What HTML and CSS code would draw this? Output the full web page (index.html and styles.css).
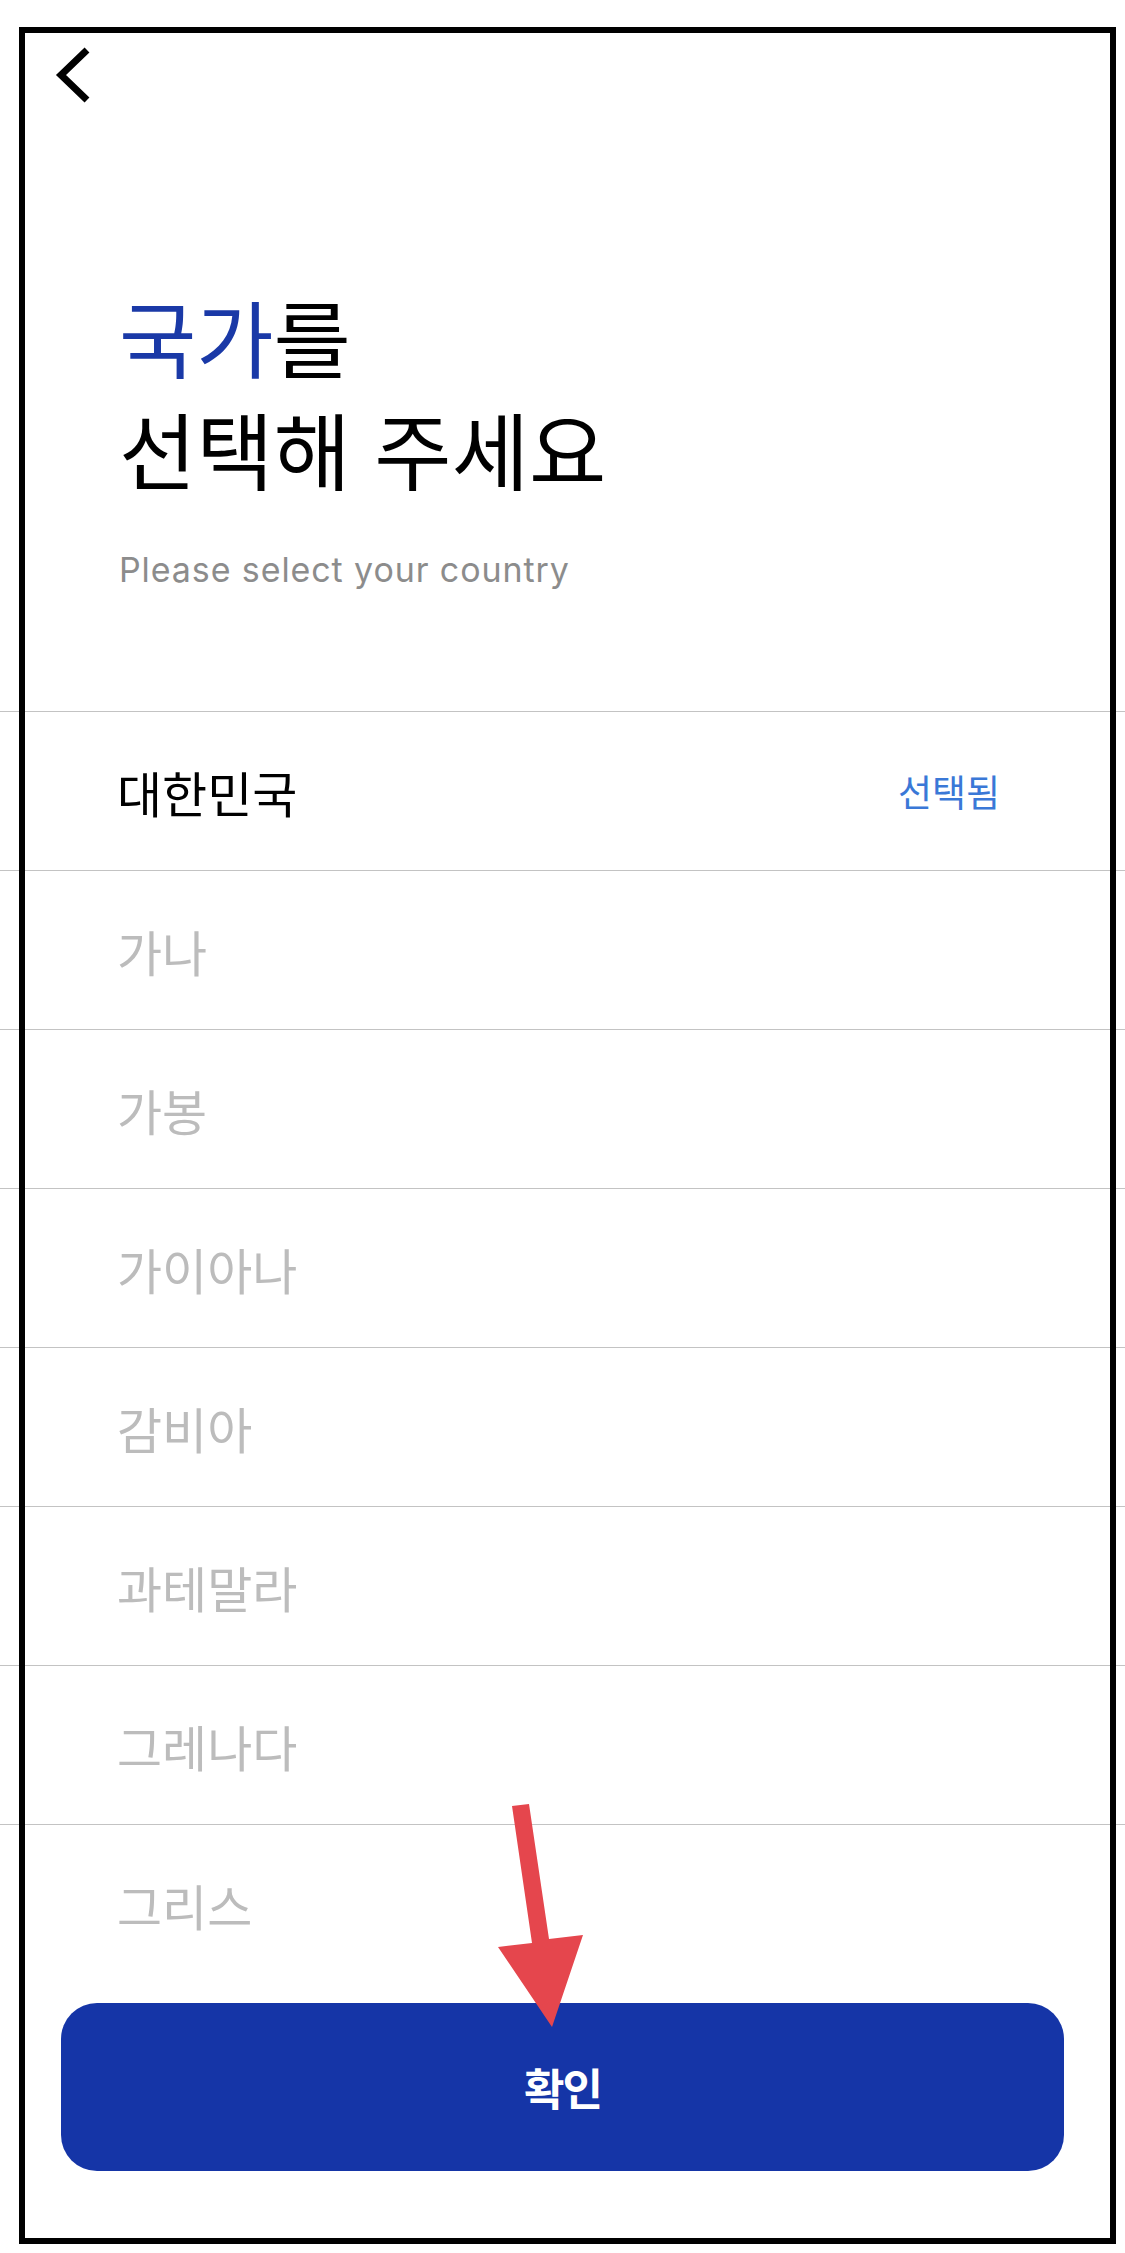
FILE: index.html
```html
<!DOCTYPE html>
<html lang="ko">
<head>
<meta charset="utf-8">
<title>국가 선택</title>
<link rel="stylesheet" href="styles.css">
</head>
<body>
<div class="screen">
  <header class="topbar">
    <button class="back" aria-label="뒤로">
      <svg width="44" height="62" viewBox="0 0 44 62">
        <polyline points="35,3 9,28 35,53" fill="none" stroke="#000" stroke-width="7" stroke-linejoin="miter"/>
      </svg>
    </button>
  </header>

  <section class="intro">
    <h1 class="title"><span class="accent">국가</span>를<br>선택해 주세요</h1>
    <p class="subtitle">Please select your country</p>
  </section>

  <ul class="country-list">
    <li class="country selected"><span class="name">대한민국</span><span class="badge">선택됨</span></li>
    <li class="country"><span class="name">가나</span></li>
    <li class="country"><span class="name">가봉</span></li>
    <li class="country"><span class="name">가이아나</span></li>
    <li class="country"><span class="name">감비아</span></li>
    <li class="country"><span class="name">과테말라</span></li>
    <li class="country"><span class="name">그레나다</span></li>
    <li class="country last"><span class="name">그리스</span></li>
  </ul>

  <footer class="footer">
    <button class="confirm">확인</button>
  </footer>

  <div class="frame"></div>
  <svg class="arrow" width="100" height="235" viewBox="0 0 100 235">
    <polygon points="22,6 39,4 59,139 93,135 62,227 8,147 42,143" fill="#e5464d"/>
  </svg>
</div>
</body>
</html>
```

FILE: styles.css
```css
html, body {
  margin: 0;
  padding: 0;
  background: #fff;
}

.screen {
  position: relative;
  width: 1125px;
  height: 2253px;
  display: flex;
  flex-direction: column;
  background: #fff;
  overflow: hidden;
  font-family: "Noto Sans CJK KR", "Noto Sans", sans-serif;
}

.topbar {
  height: 120px;
  padding: 47px 0 0 52px;
  box-sizing: border-box;
}

.back {
  display: block;
  border: 0;
  padding: 0;
  background: none;
  width: 44px;
  height: 62px;
}

.back svg {
  display: block;
}

.intro {
  padding: 160px 119px 0;
}

.title {
  margin: 0;
  font-size: 84px;
  line-height: 112px;
  font-weight: 400;
  color: #000;
}

.title .accent {
  color: #1a39a7;
}

.subtitle {
  margin: 46px 0 0;
  font-family: Inter, Roboto, sans-serif;
  font-size: 34px;
  line-height: 40px;
  letter-spacing: 0.9px;
  color: #8c8c8c;
}

.country-list {
  list-style: none;
  margin: 121px 0 0;
  padding: 0;
  border-top: 1px solid #c3c3c3;
}

.country {
  height: 158px;
  display: flex;
  align-items: center;
  justify-content: space-between;
  padding: 0 125px 0 117px;
  border-bottom: 1px solid #c3c3c3;
  font-size: 49px;
  color: #bcbcbc;
}

.country.last {
  border-bottom: 0;
}

.country.selected .name {
  color: #000;
}

.badge {
  font-size: 37px;
  color: #3a78d7;
}

.footer {
  padding: 20px 61px 0;
}

.confirm {
  display: block;
  width: 100%;
  height: 168px;
  border: 0;
  border-radius: 36px;
  background: #1535a7;
  color: #fff;
  font-family: "Noto Sans CJK KR", sans-serif;
  font-size: 44px;
  font-weight: 700;
  letter-spacing: -2px;
}

.frame {
  position: absolute;
  left: 19px;
  top: 27px;
  width: 1097px;
  height: 2217px;
  border: 6px solid #000;
  box-sizing: border-box;
  pointer-events: none;
}

.arrow {
  position: absolute;
  left: 490px;
  top: 1800px;
}
```
